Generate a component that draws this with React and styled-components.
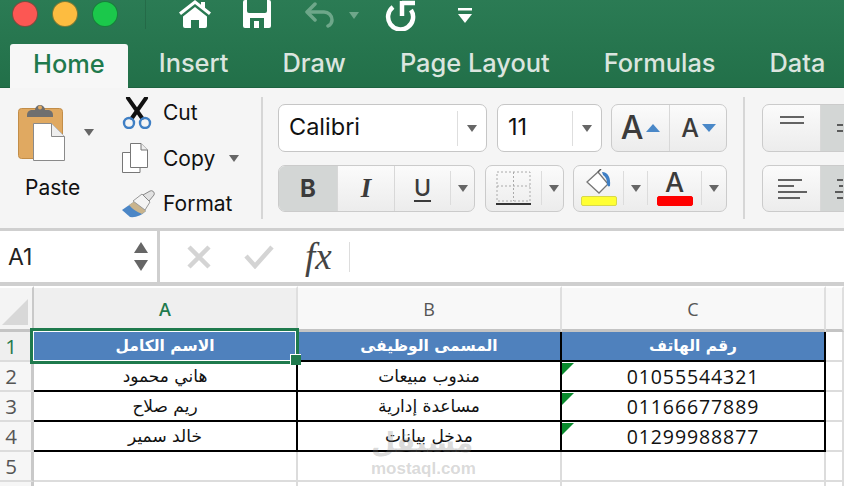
import React from "react";
import styled, { createGlobalStyle } from "styled-components";

const GlobalStyle = createGlobalStyle`
  html, body { margin: 0; padding: 0; background: #fff; }
  * { box-sizing: border-box; }
`;

const Page = styled.div`
  position: relative;
  width: 844px;
  height: 486px;
  overflow: hidden;
  font-family: "Inter", "Liberation Sans", sans-serif;
  color: #111;
`;

const Header = styled.div`
  background: linear-gradient(#2b7b54, #227049);
  border-bottom: 1px solid #1d6340;
`;

const TitleBar = styled.div`
  display: flex;
  align-items: flex-start;
  height: 44px;
  color: #fff;
`;

const Lights = styled.div`
  display: flex;
  gap: 14px;
  padding: 1px 0 0 12px;
`;

const Light = styled.span`
  width: 26px;
  height: 26px;
  border-radius: 50%;
  background: ${(p) => p.$color};
  border: 1px solid rgba(20, 70, 45, 0.55);
`;

const TitleDivider = styled.span`
  width: 1px;
  height: 29px;
  margin-left: 27px;
  background: rgba(0, 0, 0, 0.12);
`;

const QuickIcon = styled.svg`
  display: block;
  flex: none;
  margin-left: ${(p) => p.$left}px;
  margin-top: ${(p) => p.$top || 0}px;
`;

const Tabs = styled.div`
  display: flex;
  gap: 8px;
  height: 43px;
  padding-left: 10px;
`;

const Tab = styled.div`
  display: flex;
  align-items: center;
  height: ${(p) => (p.$active ? "44px" : "43px")};
  padding: 0 23px 6px;
  border-radius: 3px 3px 0 0;
  font-size: 25.4px;
  font-weight: 500;
  white-space: nowrap;
  color: ${(p) => (p.$active ? "#1f7a4d" : "#dbe5df")};
  background: ${(p) => (p.$active ? "#f7f7f7" : "transparent")};
  z-index: 1;
`;

const Ribbon = styled.div`
  display: flex;
  align-items: flex-start;
  height: 143px;
  background: #f5f5f5;
  border-bottom: 3px solid #cfcfcf;
`;

const ClipboardGroup = styled.div`
  display: flex;
  width: 261px;
  flex: none;
`;

const PasteColumn = styled.div`
  width: 122px;
  padding: 14px 0 0 18px;
`;

const PasteTop = styled.div`
  display: flex;
  align-items: center;
  gap: 19px;
`;

const PasteLabel = styled.div`
  margin: 14px 0 0 7px;
  font-size: 21px;
  line-height: 24px;
`;

const ClipList = styled.div`
  padding-top: 2px;
`;

const ClipRow = styled.div`
  display: flex;
  align-items: center;
  height: 45.5px;
  font-size: 21px;
`;

const ClipIcon = styled.span`
  display: flex;
  width: 41px;
`;

const Caret = styled.span`
  display: block;
  flex: none;
  margin-left: ${(p) => p.$left || 0}px;
  width: 0;
  height: 0;
  border-left: 5px solid transparent;
  border-right: 5px solid transparent;
  border-top: 7px solid #666;
`;

const FadedCaret = styled(Caret)`
  margin-top: 12px;
  border-top-color: #6ea78a;
`;

const RaiseCaret = styled(Caret)`
  border-top: 0;
  border-bottom: 8px solid #4a88c8;
  border-left-width: 7px;
  border-right-width: 7px;
`;

const LowerCaret = styled(Caret)`
  border-top: 8px solid #4a88c8;
  border-left-width: 7px;
  border-right-width: 7px;
`;

const Separator = styled.span`
  flex: none;
  width: 2px;
  height: 122px;
  margin-top: 9px;
  background: #d6d6d6;
`;

const ControlGroup = styled.div`
  flex: none;
  display: flex;
  flex-direction: column;
  gap: 13px;
  margin: 16px 16px 0 ${(p) => p.$left}px;
`;

const ControlRow = styled.div`
  display: flex;
  height: ${(p) => p.$height}px;
`;

const Combo = styled.div`
  display: flex;
  align-items: center;
  width: ${(p) => p.$width}px;
  margin-right: ${(p) => p.$right || 0}px;
  padding-left: 10px;
  background: #fff;
  border: 1px solid #c6c6c6;
  border-radius: 7px;
  font-size: 23.5px;
`;

const ComboValue = styled.span`
  flex: 1;
  padding-bottom: 4px;
`;

const ComboArrow = styled.span`
  display: flex;
  align-items: center;
  justify-content: center;
  width: 29px;
  height: 35px;
  border-left: 1px solid #dedede;
`;

const BtnGroup = styled.div`
  display: flex;
  width: ${(p) => p.$width}px;
  margin-right: ${(p) => p.$right || 0}px;
  overflow: hidden;
  background: linear-gradient(#fbfbfb, #ececec);
  border: 1px solid #cbcbcb;
  border-radius: 7px;
`;

const Btn = styled.div`
  display: flex;
  flex: none;
  align-items: center;
  justify-content: ${(p) => (p.$start ? "flex-start" : "center")};
  gap: 3px;
  width: ${(p) => p.$width}px;
  padding-bottom: ${(p) => p.$lift || 0}px;
  background: ${(p) => (p.$active ? "#d3d6d5" : "transparent")};
  border-right: ${(p) => (p.$last ? "none" : "1px solid #d8d8d8")};
`;

const BtnArrow = styled.span`
  display: flex;
  align-items: center;
  justify-content: center;
  flex: none;
  width: 25px;
  height: 34px;
  margin-top: 5px;
  border-left: 1px solid #dcdcdc;
  border-right: ${(p) => (p.$closed ? "1px solid #dcdcdc" : "none")};
`;

const BtnLetter = styled.span`
  font-family: ${(p) => (p.$serif ? '"Liberation Serif", serif' : '"Inter", sans-serif')};
  font-size: ${(p) => p.$size}px;
  font-weight: ${(p) => (p.$bold ? 700 : 500)};
  font-style: ${(p) => (p.$italic ? "italic" : "normal")};
  line-height: 1;
  color: #3b3b3b;
  text-decoration: ${(p) => (p.$underline ? "underline" : "none")};
  text-underline-offset: 4px;
`;

const SwatchLetter = styled(BtnLetter)`
  height: 26px;
`;

const ColorBtn = styled.div`
  display: flex;
  flex-direction: column;
  align-items: center;
  width: ${(p) => p.$width}px;
  flex: none;
  padding-top: 3px;
`;

const ColorBar = styled.span`
  width: 36px;
  height: 10px;
  margin-top: 1px;
  border-radius: 2px;
  background: ${(p) => p.$color};
  border: 1px solid ${(p) => p.$edge};
`;

const FormulaBar = styled.div`
  display: flex;
  align-items: center;
  height: 55px;
  border-bottom: 4px solid #cfcfcf;
  background: #fff;
`;

const NameBox = styled.div`
  display: flex;
  align-items: center;
  justify-content: space-between;
  width: 160px;
  height: 100%;
  padding: 0 9px 0 8px;
  font-size: 23px;
  color: #222;
  border-right: 3px solid #cfcfcf;
`;

const Spinner = styled.span`
  display: flex;
  flex-direction: column;
  gap: 7px;
`;

const Spin = styled.span`
  width: 0;
  height: 0;
  border-left: 7px solid transparent;
  border-right: 7px solid transparent;
  border-${(p) => (p.$up ? "bottom" : "top")}: 11px solid #666;
`;

const FormulaTools = styled.div`
  display: flex;
  align-items: center;
  padding-left: 27px;
`;

const FxLabel = styled.span`
  margin-left: 31px;
  padding-right: 17px;
  font-family: "Liberation Serif", serif;
  font-size: 37px;
  font-style: italic;
  color: #444;
  border-right: 1px solid #ddd;
  line-height: 30px;
`;

const SheetGrid = styled.div`
  display: grid;
  grid-template-columns: 34px 264px 264px 264px 18px;
  grid-template-rows: 46px repeat(6, 30px);
  background: #fff;
`;

const Corner = styled.div`
  position: relative;
  background: #f4f4f4;
  border-right: 2px solid #c9c9c9;
  border-top: 2px solid #fff;
  border-bottom: 3px solid #c4c4c4;
  overflow: hidden;

  &::after {
    content: "";
    position: absolute;
    right: 4px;
    bottom: 4px;
    width: 26px;
    height: 26px;
    background: #d8d8d8;
    clip-path: polygon(100% 0, 100% 100%, 0 100%);
  }
`;

const ColHead = styled.div`
  display: flex;
  align-items: center;
  justify-content: center;
  font-family: "Open Sans", sans-serif;
  font-size: 18px;
  color: ${(p) => (p.$active ? "#1f7a4d" : "#555")};
  font-weight: ${(p) => (p.$active ? 600 : 400)};
  background: ${(p) => (p.$active ? "#efefef" : "#f8f8f8")};
  border-top: 2px solid #fff;
  border-right: 2px solid #dfdfdf;
  border-bottom: 3px solid #c4c4c4;
`;

const RowHead = styled.div`
  display: flex;
  align-items: center;
  justify-content: center;
  font-family: "Open Sans", sans-serif;
  font-size: 20.5px;
  padding-right: 9px;
  color: ${(p) => (p.$active ? "#1f7a4d" : "#555")};
  background: ${(p) => (p.$active ? "#efefef" : "#f6f6f6")};
  border-right: 3px solid #c9c9c9;
  border-bottom: 2px solid #dcdcdc;
`;

const Cell = styled.div`
  position: relative;
  display: flex;
  align-items: center;
  justify-content: center;
  font-family: ${(p) => (p.$latin ? '"Open Sans", sans-serif' : '"DejaVu Sans", sans-serif')};
  font-size: ${(p) => (p.$latin ? 19.5 : p.$head ? 15.5 : 17)}px;
  font-weight: ${(p) => (p.$head ? 700 : 400)};
  letter-spacing: ${(p) => (p.$latin ? "0.9px" : 0)};
  color: ${(p) => (p.$head ? "#fff" : "#111")};
  background: ${(p) => (p.$head ? "#4f81bd" : "#fff")};
  border-right: 2px solid ${(p) => (p.$plain ? "#dcdcdc" : "#000")};
  border-bottom: 2px solid ${(p) => (p.$plain ? "#dcdcdc" : "#000")};
`;

const ErrorMark = styled.span`
  position: absolute;
  top: 1px;
  left: 0;
  width: 12px;
  height: 12px;
  background: #0a8a2d;
  clip-path: polygon(0 0, 100% 0, 0 100%);
`;

const Selection = styled.div`
  position: absolute;
  left: 30px;
  top: 328px;
  width: 269px;
  height: 36px;
  border: 3px solid #1f7a4d;
  box-shadow: inset 0 0 0 1px #fff;
  pointer-events: none;
`;

const SelectionHandle = styled.span`
  position: absolute;
  right: -5px;
  bottom: -4px;
  width: 11px;
  height: 11px;
  background: #1f7a4d;
  border-left: 1px solid #fff;
  border-top: 1px solid #fff;
`;

const Watermark = styled.div`
  position: absolute;
  left: 371px;
  top: 426px;
  width: 102px;
  text-align: center;
  color: rgba(130, 130, 130, 0.3);
  pointer-events: none;
`;

const WatermarkLogo = styled.div`
  font-family: "DejaVu Sans", sans-serif;
  font-size: 28px;
  font-weight: 700;
  line-height: 34px;
`;

const WatermarkSite = styled.div`
  font-family: "Liberation Sans", sans-serif;
  font-size: 17px;
  font-weight: 700;
  line-height: 18px;
`;

const HomeIcon = () => (
  <QuickIcon $left={33} width="32" height="28" viewBox="0 0 32 28" fill="#fff">
    <path d="M16 0 0 12.5 2 15 16 4 30 15 32 12.5 26 7.8V2h-4v2.7z" />
    <path d="M16 7 4 16.5V26a2 2 0 0 0 2 2h6v-8h8v8h6a2 2 0 0 0 2-2v-9.500z" />
  </QuickIcon>
);

const SaveIcon = () => (
  <QuickIcon $left={32} width="28" height="28" viewBox="0 0 28 28" fill="#fff">
    <path
      fillRule="evenodd"
      d="M2 0h24a2 2 0 0 1 2 2v24a2 2 0 0 1-2 2H2a2 2 0 0 1-2-2V2a2 2 0 0 1 2-2zm2 0v11a2 2 0 0 0 2 2h16a2 2 0 0 0 2-2V0zM7 28h14V18H7zm4-7h5v7h-5z"
    />
  </QuickIcon>
);

const UndoIcon = () => (
  <QuickIcon $left={34} $top={2} width="30" height="26" viewBox="0 0 30 26" fill="none" stroke="#6ea78a" strokeWidth="3.500" strokeLinecap="round" strokeLinejoin="round">
    <path d="M10 2 2 10l8 8" />
    <path d="M3 10h16a8 8 0 0 1 8 8c0 3-2 5-4 6" />
  </QuickIcon>
);

const RedoIcon = () => (
  <QuickIcon $left={26} width="32" height="31" viewBox="0 0 32 31" fill="none" stroke="#fff" strokeWidth="4.500">
    <path d="M8 7A12.500 12.500 0 1 0 26 10" />
    <path d="M17 1v15" />
    <path d="M17 3h13" />
  </QuickIcon>
);

const MoreIcon = () => (
  <QuickIcon $left={41} $top={8} width="14" height="15" viewBox="0 0 14 15" fill="#fff">
    <rect width="14" height="2.500" />
    <path d="M0 6h14L7 15z" />
  </QuickIcon>
);

const ClipboardIcon = () => (
  <svg width="47" height="60" viewBox="0 0 47 60">
    <rect x="0.5" y="6.500" width="44" height="50" rx="3" fill="#e0a961" stroke="#c28d48" />
    <path d="M9 13q0-4 4-5h4a5 5 0 0 1 10 0h4q4 1 4 5v2H9z" fill="#6f6f6f" />
    <circle cx="22" cy="5.500" r="2" fill="#e0a961" />
    <path d="M15.500 21.500h18l13 13v24h-31z" fill="#fff" stroke="#8a8a8a" />
    <path d="M33.500 21.500v13h13" fill="#eee" stroke="#8a8a8a" />
  </svg>
);

const ScissorsIcon = () => (
  <svg width="30" height="32" viewBox="0 0 30 32" fill="none">
    <path d="M6 1 20 21M24 1 10 21" stroke="#111" strokeWidth="4" strokeLinecap="round" />
    <circle cx="7" cy="26" r="5" stroke="#3f7fc4" strokeWidth="2.400" />
    <circle cx="23" cy="26" r="5" stroke="#3f7fc4" strokeWidth="2.400" />
  </svg>
);

const CopyIcon = () => (
  <svg width="26" height="30" viewBox="0 0 26 30" fill="#fff" stroke="#777">
    <path d="M.5 9.500H18v20H.5z" />
    <path d="M8.500.5H19L25.500 7v17.500h-17z" />
    <path d="M19 .5V7h6.500" fill="#eee" />
  </svg>
);

const BrushIcon = () => (
  <svg width="33" height="28" viewBox="0 0 33 28">
    <path d="M0 20 13 11 24 21Q17 28 8 27Z" fill="#4b86c6" />
    <path d="M7 15 13 11 24 21 20 24Q12 21 7 15Z" fill="#c9b48d" />
    <path d="M11 11 20 4 28 12 23 20Z" fill="#f4f4f4" stroke="#999" />
    <path d="M21 5 28 1a3 3 0 0 1 4 4l-5 6z" fill="#e2e2e2" stroke="#888" />
  </svg>
);

const BordersIcon = () => (
  <svg width="36" height="36" viewBox="0 0 36 36" fill="none" stroke="#aaa" strokeDasharray="2 2">
    <rect x="1" y="1" width="33" height="29" />
    <path d="M17.500 1v29M1 15h33" />
    <path d="M0 33h35" stroke="#333" strokeWidth="2" strokeDasharray="none" />
  </svg>
);

const BucketIcon = () => (
  <svg width="28" height="26" viewBox="0 0 28 26">
    <path d="M2 13 13 3l10 12-9 9z" fill="#fff" stroke="#777" strokeWidth="1.300" />
    <path d="M13 3 16 0" stroke="#555" strokeWidth="1.500" />
    <path d="M17 3c6 0 9 6 8 14-1.500 1-2.500 0-3-2 0-4-1-7-4-9z" fill="#3f7fc4" />
  </svg>
);

const CrossIcon = () => (
  <svg width="24" height="24" viewBox="0 0 24 24" stroke="#d4d4d4" strokeWidth="4.500">
    <path d="M2 2 22 22M22 2 2 22" />
  </svg>
);

const CheckIcon = () => (
  <QuickIcon $left={33} width="30" height="24" viewBox="0 0 30 24" fill="none" stroke="#d4d4d4" strokeWidth="4.500">
    <path d="M2 11 11 21 28 2" />
  </QuickIcon>
);

const tabs = ["Home", "Insert", "Draw", "Page Layout", "Formulas", "Data"];

const rows = [
  { n: 2, a: "هاني محمود", b: "مندوب مبيعات", c: "01055544321" },
  { n: 3, a: "ريم صلاح", b: "مساعدة إدارية", c: "01166677889" },
  { n: 4, a: "خالد سمير", b: "مدخل بيانات", c: "01299988877" },
];

const App = () => {
  return (
    <Page>
      <GlobalStyle />
      <Header>
        <TitleBar>
          <Lights>
            <Light $color="#fc5753" />
            <Light $color="#fdbc40" />
            <Light $color="#1bc84b" />
          </Lights>
          <TitleDivider />
          <HomeIcon />
          <SaveIcon />
          <UndoIcon />
          <FadedCaret $left={14} />
          <RedoIcon />
          <MoreIcon />
        </TitleBar>
        <Tabs>
          {tabs.map((t, i) => (
            <Tab key={t} $active={i === 0}>
              {t}
            </Tab>
          ))}
        </Tabs>
      </Header>

      <Ribbon>
        <ClipboardGroup>
          <PasteColumn>
            <PasteTop>
              <ClipboardIcon />
              <Caret />
            </PasteTop>
            <PasteLabel>Paste</PasteLabel>
          </PasteColumn>
          <ClipList>
            <ClipRow>
              <ClipIcon>
                <ScissorsIcon />
              </ClipIcon>
              Cut
            </ClipRow>
            <ClipRow>
              <ClipIcon>
                <CopyIcon />
              </ClipIcon>
              Copy
              <Caret $left={14} />
            </ClipRow>
            <ClipRow>
              <ClipIcon>
                <BrushIcon />
              </ClipIcon>
              Format
            </ClipRow>
          </ClipList>
        </ClipboardGroup>
        <Separator />

        <ControlGroup $left={15}>
          <ControlRow $height={48}>
            <Combo $width={209} $right={10}>
              <ComboValue>Calibri</ComboValue>
              <ComboArrow>
                <Caret />
              </ComboArrow>
            </Combo>
            <Combo $width={105} $right={9}>
              <ComboValue>11</ComboValue>
              <ComboArrow>
                <Caret />
              </ComboArrow>
            </Combo>
            <BtnGroup $width={116}>
              <Btn $width={58}>
                <BtnLetter $size={32}>A</BtnLetter>
                <RaiseCaret />
              </Btn>
              <Btn $width={57} $last>
                <BtnLetter $size={25}>A</BtnLetter>
                <LowerCaret />
              </Btn>
            </BtnGroup>
          </ControlRow>
          <ControlRow $height={47}>
            <BtnGroup $width={197} $right={10}>
              <Btn $width={59} $active>
                <BtnLetter $size={24} $bold>B</BtnLetter>
              </Btn>
              <Btn $width={57}>
                <BtnLetter $size={27} $serif $bold $italic>I</BtnLetter>
              </Btn>
              <Btn $width={55} $last>
                <BtnLetter $size={23} $underline>U</BtnLetter>
              </Btn>
              <BtnArrow>
                <Caret />
              </BtnArrow>
            </BtnGroup>
            <BtnGroup $width={79} $right={9}>
              <Btn $width={55} $last>
                <BordersIcon />
              </Btn>
              <BtnArrow>
                <Caret />
              </BtnArrow>
            </BtnGroup>
            <BtnGroup $width={154}>
              <ColorBtn $width={49}>
                <BucketIcon />
                <ColorBar $color="#ffff33" $edge="#d8d84a" />
              </ColorBtn>
              <BtnArrow $closed>
                <Caret />
              </BtnArrow>
              <ColorBtn $width={53}>
                <SwatchLetter $size={27}>A</SwatchLetter>
                <ColorBar $color="#f00" $edge="#f00" />
              </ColorBtn>
              <BtnArrow>
                <Caret />
              </BtnArrow>
            </BtnGroup>
          </ControlRow>
        </ControlGroup>
        <Separator />

        <ControlGroup $left={17}>
          <ControlRow $height={48}>
            <BtnGroup $width={100}>
              <Btn $width={58} $lift={16}>
                <svg width="26" height="8" viewBox="0 0 26 8" stroke="#333" strokeWidth="1.600">
                  <path d="M1 1h24M1 7h24" />
                </svg>
              </Btn>
              <Btn $width={42} $active $last $start>
                <svg width="22" height="8" viewBox="0 0 22 8" stroke="#333" strokeWidth="1.600">
                  <path d="M16 1h6M16 7h6" />
                </svg>
              </Btn>
            </BtnGroup>
          </ControlRow>
          <ControlRow $height={47}>
            <BtnGroup $width={100}>
              <Btn $width={58}>
                <svg width="32" height="22" viewBox="0 0 32 22" stroke="#333" strokeWidth="1.600">
                  <path d="M2 2h24M2 8h16M2 14h29M2 20h22" />
                </svg>
              </Btn>
              <Btn $width={42} $active $last $start>
                <svg width="22" height="22" viewBox="0 0 22 22" stroke="#333" strokeWidth="1.600">
                  <path d="M16 2h6M18 8h4M14 14h8M16 20h6" />
                </svg>
              </Btn>
            </BtnGroup>
          </ControlRow>
        </ControlGroup>
      </Ribbon>

      <FormulaBar>
        <NameBox>
          A1
          <Spinner>
            <Spin $up />
            <Spin />
          </Spinner>
        </NameBox>
        <FormulaTools>
          <CrossIcon />
          <CheckIcon />
          <FxLabel>fx</FxLabel>
        </FormulaTools>
      </FormulaBar>

      <SheetGrid>
        <Corner />
        <ColHead $active>A</ColHead>
        <ColHead>B</ColHead>
        <ColHead>C</ColHead>
        <ColHead />

        <RowHead $active>1</RowHead>
        <Cell $head>الاسم الكامل</Cell>
        <Cell $head>المسمى الوظيفى</Cell>
        <Cell $head>رقم الهاتف</Cell>
        <Cell $plain />

        {rows.map((r) => (
          <React.Fragment key={r.n}>
            <RowHead>{r.n}</RowHead>
            <Cell>{r.a}</Cell>
            <Cell>{r.b}</Cell>
            <Cell $latin>
              <ErrorMark />
              {r.c}
            </Cell>
            <Cell $plain />
          </React.Fragment>
        ))}

        <RowHead>5</RowHead>
        <Cell $plain />
        <Cell $plain />
        <Cell $plain />
        <Cell $plain />

        <RowHead />
        <Cell $plain />
        <Cell $plain />
        <Cell $plain />
        <Cell $plain />
      </SheetGrid>

      <Selection>
        <SelectionHandle />
      </Selection>

      <Watermark>
        <WatermarkLogo>مستقل</WatermarkLogo>
        <WatermarkSite>mostaql.com</WatermarkSite>
      </Watermark>
    </Page>
  );
};

export default App;
